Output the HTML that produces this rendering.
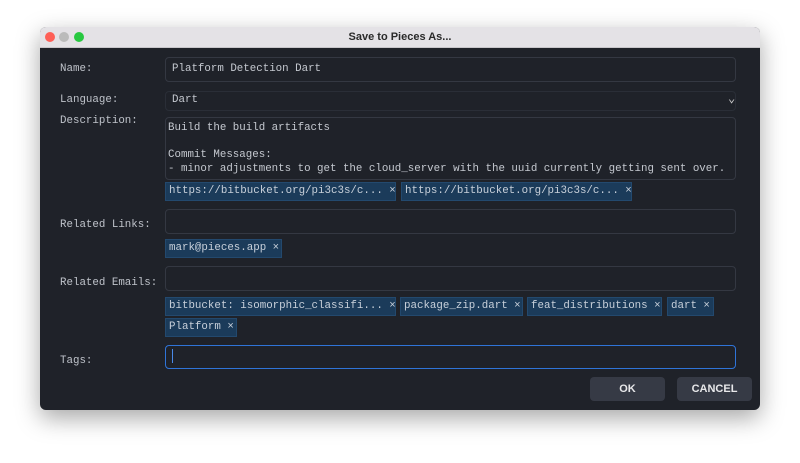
<!DOCTYPE html><html><head><style>
body{margin:0;width:800px;height:463px;background:#fff;position:relative;overflow:hidden;font-family:"Liberation Mono",monospace;font-size:10.8px;color:#c5c9d0}
.win{position:absolute;left:40px;top:27px;width:720px;height:383px;border-radius:6px;background:#1f2229;overflow:hidden;box-shadow:0 8px 24px rgba(0,0,0,.35)}
.tb{height:20px;background:#e4e2e6;border-bottom:1px solid #c8c6ca;text-align:center;font:bold 11px "Liberation Sans",sans-serif;color:#2a2a2a;line-height:20px}
.d{position:absolute;top:5px;width:10px;height:10px;border-radius:50%}
.a{position:absolute;white-space:pre}
.lb{left:20px;color:#bfc3ca}
.in{position:absolute;left:125px;width:569px;border:1px solid #343842;border-radius:4px;background:#1f2229}
.chip{position:absolute;box-sizing:border-box;height:19px;line-height:17px;background:#1b3b5a;border:1px solid #23496e;padding:0 3px;white-space:pre;color:#c8d0da;overflow:hidden}
.btn{position:absolute;top:350px;width:75px;height:24px;border-radius:4px;background:#363a45;color:#e8e8ea;font:bold 11px "Liberation Sans",sans-serif;text-align:center;line-height:24px}
</style></head><body>
<div class="win">
<div class="tb">Save to Pieces As...</div>
<div class="d" style="left:5px;background:#fe5f57"></div>
<div class="d" style="left:19px;background:#bbb"></div>
<div class="d" style="left:34px;background:#28c840"></div>
<div class="a lb" style="top:36px">Name:</div>
<div class="in" style="top:30px;height:23px"></div>
<div class="a" style="left:132px;top:36px">Platform Detection Dart</div>
<div class="a lb" style="top:67px">Language:</div>
<div class="in" style="top:64px;height:18px;border-color:#2a2e37"></div>
<div class="a" style="left:132px;top:67px">Dart</div>
<div class="a" style="left:688px;top:64px;color:#ccc;font-size:12px">⌄</div>
<div class="a lb" style="top:88px">Description:</div>
<div class="in" style="top:90px;height:61px"></div>
<div class="a" style="left:128px;top:95px;line-height:13.5px">Build the build artifacts

Commit Messages:
- minor adjustments to get the cloud_server with the uuid currently getting sent over.</div>
<div class="chip" style="left:125px;top:155px;width:231px">https://bitbucket.org/pi3c3s/c... ×</div>
<div class="chip" style="left:361px;top:155px;width:231px">https://bitbucket.org/pi3c3s/c... ×</div>
<div class="a lb" style="top:192px">Related Links:</div>
<div class="in" style="top:182px;height:23px"></div>
<div class="chip" style="left:125px;top:212px;width:117px">mark@pieces.app ×</div>
<div class="a lb" style="top:250px">Related Emails:</div>
<div class="in" style="top:239px;height:23px"></div>
<div class="chip" style="left:125px;top:270px;width:231px">bitbucket: isomorphic_classifi... ×</div>
<div class="chip" style="left:360px;top:270px;width:123px">package_zip.dart ×</div>
<div class="chip" style="left:487px;top:270px;width:135px">feat_distributions ×</div>
<div class="chip" style="left:627px;top:270px;width:47px">dart ×</div>
<div class="chip" style="left:125px;top:291px;width:72px">Platform ×</div>
<div class="a lb" style="top:328px">Tags:</div>
<div class="in" style="top:318px;height:22px;border:1.5px solid #2f74d8"></div>
<div class="a" style="left:132px;top:322px;width:1px;height:14px;background:#4a8ae8"></div>
<div class="btn" style="left:550px">OK</div>
<div class="btn" style="left:637px">CANCEL</div>
</div>
</body></html>
